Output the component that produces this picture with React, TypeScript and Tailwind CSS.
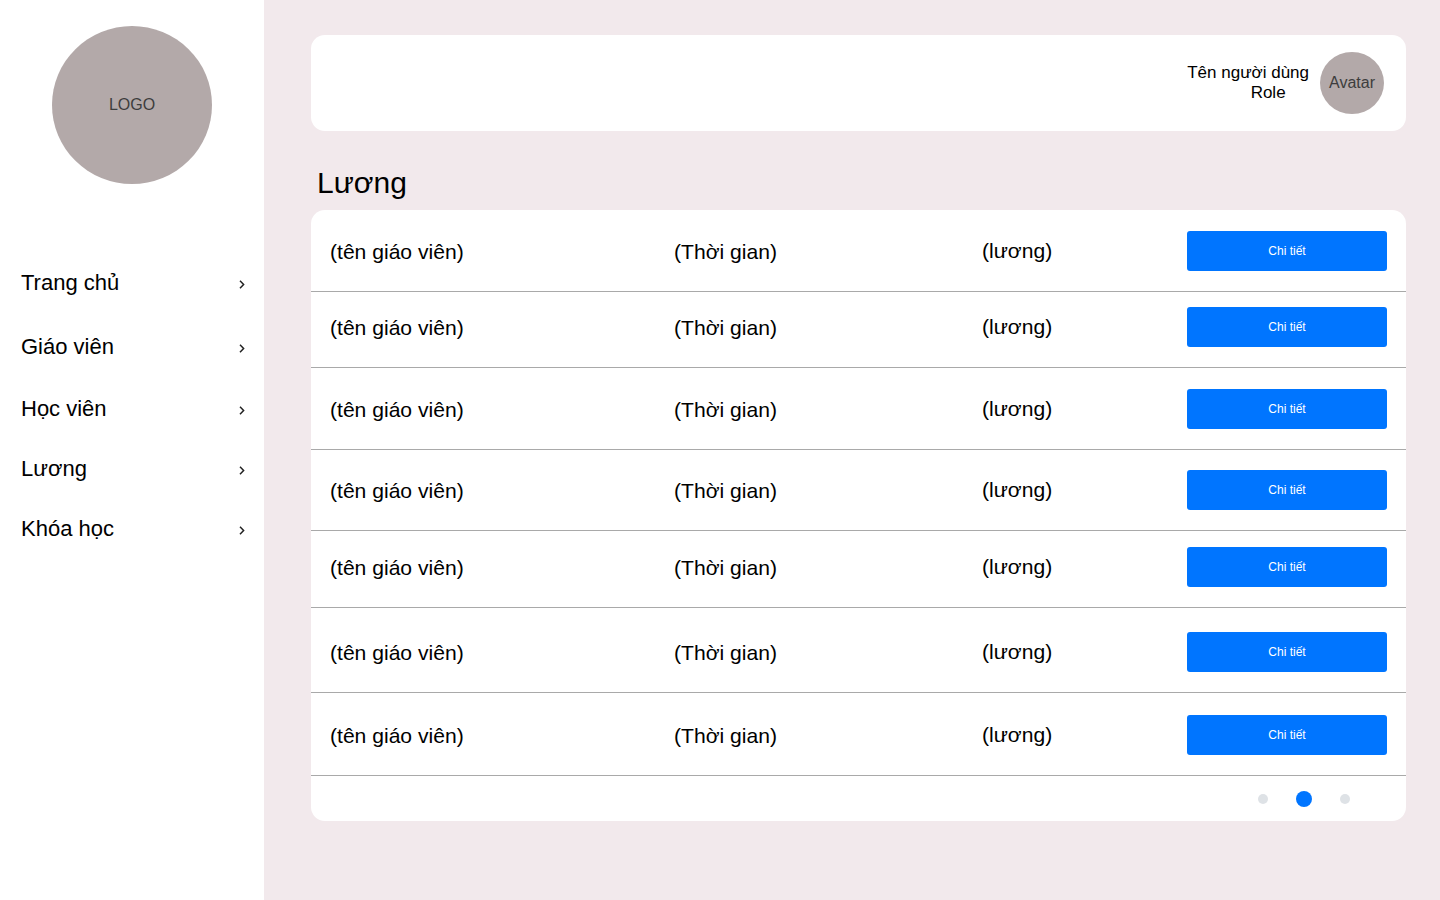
const rows = [
  { pad: "pt-[21px]" },
  { pad: "pt-[15px]" },
  { pad: "pt-[21px]" },
  { pad: "pt-[20px]" },
  { pad: "pt-[16px]" },
  { pad: "pt-[24px]" },
  { pad: "pt-[22px]" },
];

const nav = [
  { label: "Trang chủ", cls: "h-[64px]" },
  { label: "Giáo viên", cls: "h-[64px]" },
  { label: "Học viên", cls: "h-[60px]" },
  { label: "Lương", cls: "h-[60px]" },
  { label: "Khóa học", cls: "h-[60px]" },
];

function Chevron() {
  return (
    <svg width="6" height="9" viewBox="0 0 6 9" fill="none" className="block translate-y-[2px] text-[#222]">
      <path d="M1 .8l3.6 3.7L1 8.2" stroke="currentColor" strokeWidth="1.5" />
    </svg>
  );
}

export default function App() {
  return (
    <div className="flex h-[900px] w-[1440px] overflow-hidden bg-[#f2e9ec] font-['Liberation_Sans',Arial,sans-serif] text-black">
      <aside className="h-full w-[264px] shrink-0 bg-white pt-[26px]">
        <div className="ml-[52px] flex h-[158px] w-[160px] items-center justify-center rounded-[50%] bg-[#b3a9a9] text-[16px] text-[#3d3d3d]">
          LOGO
        </div>
        <nav className="mt-[66px]">
          {nav.map((n) => (
            <div key={n.label} className={`flex items-center justify-between pl-[21px] pr-[19px] text-[22px] ${n.cls}`}>
              <span>{n.label}</span>
              <Chevron />
            </div>
          ))}
        </nav>
      </aside>
      <main className="min-w-0 flex-1 pl-[47px] pr-[34px] pt-[35px]">
        <header className="flex h-[96px] items-center justify-end rounded-[14px] bg-white pr-[22px]">
          <div className="text-center text-[17px] leading-[20px]">
            <div>Tên người dùng</div>
            <div className="pl-[40px]">Role</div>
          </div>
          <div className="ml-[11px] flex h-[62px] w-[64px] items-center justify-center rounded-[50%] bg-[#b3a9a9] text-[16px] text-[#3d3d3d]">
            Avatar
          </div>
        </header>
        <h1 className="mt-[32px] h-[47px] pl-[6px] text-[30px] leading-[40px]">Lương</h1>
        <section className="h-[611px] overflow-hidden rounded-[14px] bg-white">
          {rows.map((r, i) => (
            <div
              key={i}
              className={`grid grid-cols-[344px_308px_205px_200px] items-center border-b border-[#a9a9a9] pb-[20px] pl-[19px] ${r.pad}`}
            >
              <span className="translate-y-px text-[21.1px]">(tên giáo viên)</span>
              <span className="translate-y-px text-[21.1px]">(Thời gian)</span>
              <span className="text-[21.1px]">(lương)</span>
              <button className="h-[40px] rounded-[3px] bg-[#0075ff] text-[12px] text-white">Chi tiết</button>
            </div>
          ))}
          <div className="flex h-[45px] items-center pl-[947px]">
            <span className="h-[10px] w-[10px] rounded-full bg-[#dee2e6]" />
            <span className="ml-[28px] h-[16px] w-[16px] rounded-full bg-[#0075ff]" />
            <span className="ml-[28px] h-[10px] w-[10px] rounded-full bg-[#dee2e6]" />
          </div>
        </section>
      </main>
    </div>
  );
}
